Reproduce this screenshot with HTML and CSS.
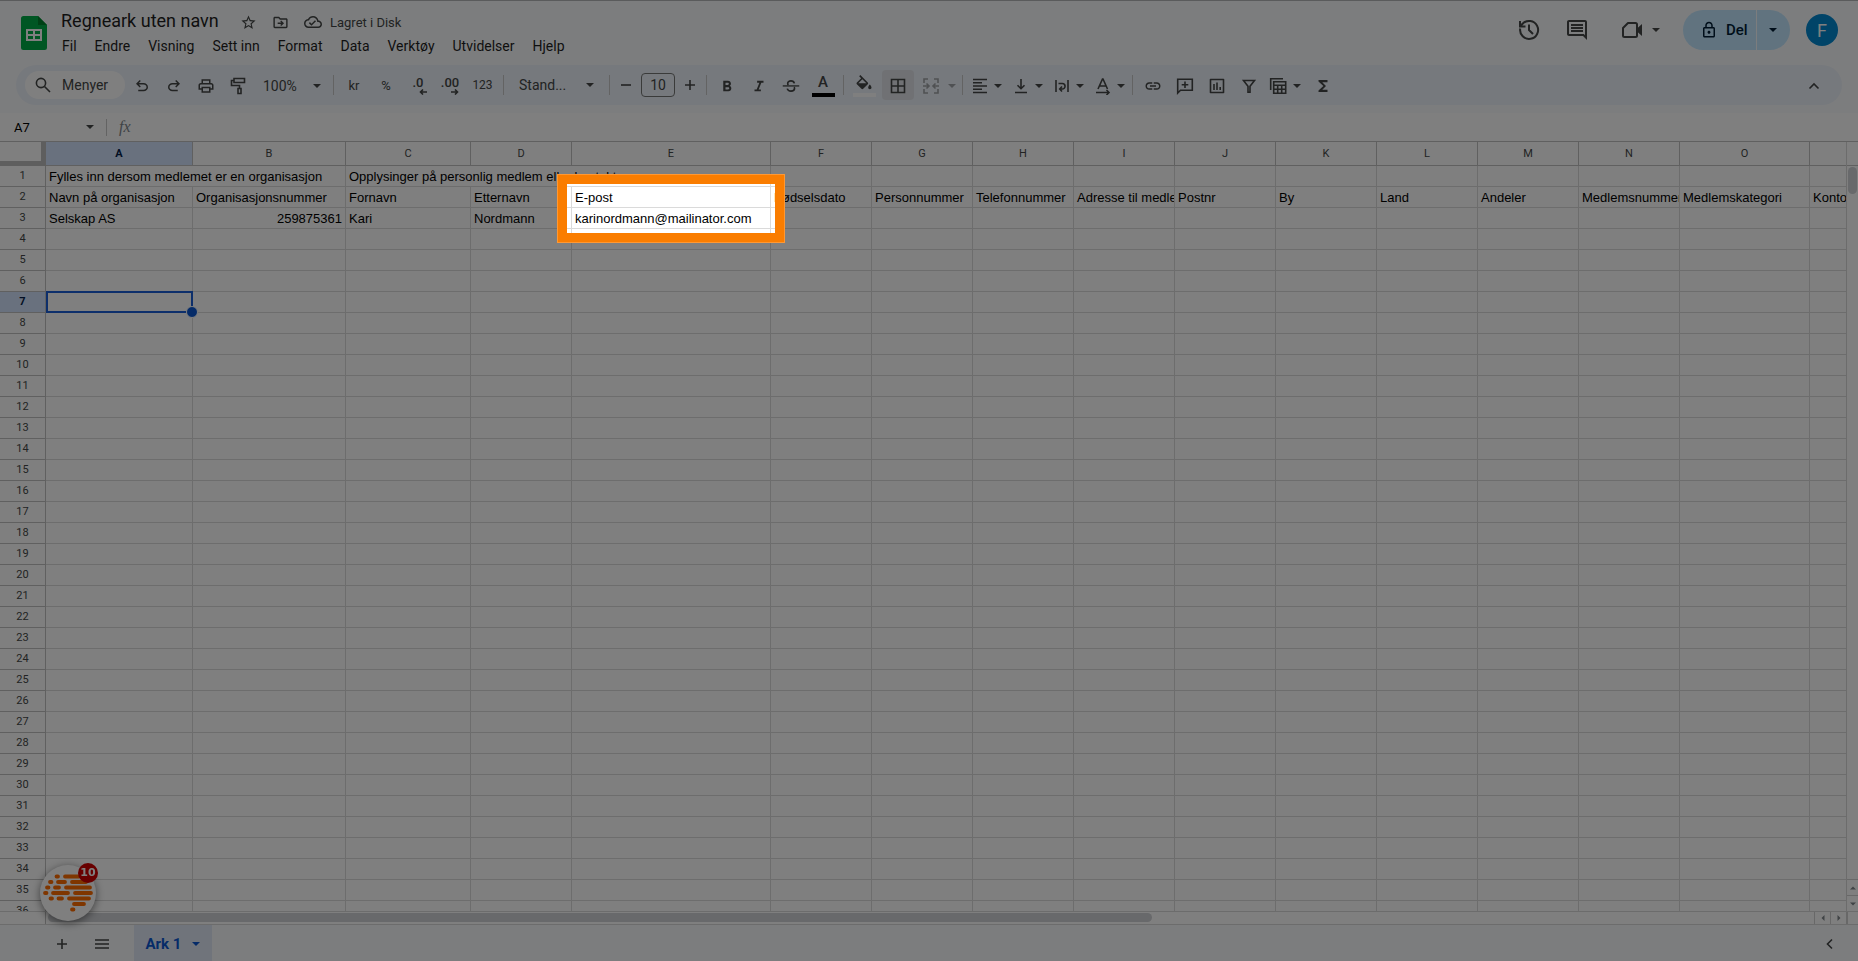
FILE: index.html
```html
<!DOCTYPE html>
<html lang="no">
<head>
<meta charset="utf-8">
<title>Regneark uten navn</title>
<link rel="stylesheet" href="styles.css">
</head>
<body>
<svg class="defs" aria-hidden="true">
  <symbol id="caret" viewBox="0 0 8 4"><path d="M0 0h8L4 4z"/></symbol>
</svg>
<div class="app">
  <header class="top">
    <svg class="logo" viewBox="0 0 26 34"><path fill="#00ac47" d="M2.500 0H17l9 9v22.500a2.500 2.500 0 0 1-2.500 2.500h-21A2.500 2.500 0 0 1 0 31.500v-29A2.500 2.500 0 0 1 2.500 0z"/><path fill="#00832d" d="M17 0l9 9h-9z"/><path fill="#fff" fill-rule="evenodd" d="M5 13h16v12H5zM7 15v3h5v-3zM14 15v3h5v-3zM7 20v3h5v-3zM14 20v3h5v-3z"/></svg>
    <div class="titles">
      <div class="titlerow">
        <input class="doctitle" value="Regneark uten navn" aria-label="Gi nytt navn">
        <button class="ticon" aria-label="Stjerne"><svg viewBox="0 0 24 24"><path d="M22 9.240l-7.190-.62L12 2 9.190 8.630 2 9.240l5.460 4.730L5.820 21 12 17.270 18.180 21l-1.630-7.030L22 9.240zM12 15.400l-3.760 2.270 1-4.280-3.320-2.880 4.380-.38L12 6.100l1.710 4.040 4.380.38-3.320 2.880 1 4.280L12 15.400z"/></svg></button>
        <button class="ticon" aria-label="Flytt"><svg viewBox="0 0 24 24"><path d="M20 6h-8l-2-2H4c-1.100 0-2 .9-2 2v12c0 1.100.9 2 2 2h16c1.100 0 2-.9 2-2V8c0-1.100-.9-2-2-2zm0 12H4V6h5.170l2 2H20v10z"/><path d="M8 12h5.170l-1.590-1.590L13 9l4 4-4 4-1.410-1.410L13.170 14H8z"/></svg></button>
        <button class="ticon saved"><svg viewBox="0 0 24 24"><path d="M19.350 10.040C18.670 6.590 15.640 4 12 4 9.110 4 6.600 5.640 5.350 8.040 2.340 8.360 0 10.910 0 14c0 3.310 2.690 6 6 6h13c2.760 0 5-2.240 5-5 0-2.640-2.050-4.780-4.650-4.960zM19 18H6c-2.210 0-4-1.790-4-4 0-2.050 1.530-3.760 3.560-3.970l1.070-.11.5-.95C8.080 7.140 9.940 6 12 6c2.620 0 4.880 1.860 5.390 4.430l.3 1.500 1.530.11c1.560.1 2.780 1.410 2.780 2.960 0 1.650-1.350 3-3 3zm-9-3.820l-2.090-2.090L6.500 13.500 10 17l6.010-6.010-1.410-1.410z"/></svg><span>Lagret i Disk</span></button>
      </div>
      <nav class="menus">
        <button>Fil</button><button>Endre</button><button>Visning</button><button>Sett inn</button><button>Format</button><button>Data</button><button>Verktøy</button><button>Utvidelser</button><button>Hjelp</button>
      </nav>
    </div>
    <div class="actions">
      <button class="act" aria-label="Versjonslogg"><svg class="line" viewBox="0 0 24 24"><path d="M3.200 10.500A9 9 0 1 0 5.600 5.700L3 8.300M3 3v5.500h5.500M12 6.500V12l4 4"/></svg></button>
      <button class="act" aria-label="Kommentarer"><svg viewBox="0 0 24 24"><path d="M21.990 4c0-1.100-.89-2-1.990-2H4c-1.100 0-2 .9-2 2v12c0 1.100.9 2 2 2h14l4 4-.01-18zM20 4v13.170L18.830 16H4V4h16zM6 12h12v2H6zm0-3h12v2H6zm0-3h12v2H6z"/></svg></button>
      <button class="act meet" aria-label="Møte"><svg viewBox="0 0 24 24"><path fill="none" stroke="currentColor" stroke-width="2" stroke-linejoin="round" d="M8 5h7.500a1.500 1.500 0 0 1 1.500 1.500v11a1.500 1.500 0 0 1-1.500 1.500h-11A1.500 1.500 0 0 1 3 17.500V10z"/><path d="M17 10.500L22 6v12l-5-4.500z"/></svg><svg class="caret"><use href="#caret"/></svg></button>
      <div class="share">
        <button class="del"><svg viewBox="0 0 24 24"><path fill-rule="evenodd" d="M18 8h-1V6c0-2.760-2.240-5-5-5S7 3.240 7 6v2H6c-1.100 0-2 .9-2 2v10c0 1.100.9 2 2 2h12c1.100 0 2-.9 2-2V10c0-1.100-.9-2-2-2zM9 6c0-1.660 1.340-3 3-3s3 1.340 3 3v2H9V6zm9 14H6V10h12v10zm-6-3c1.100 0 2-.9 2-2s-.9-2-2-2-2 .9-2 2 .9 2 2 2z"/></svg>Del</button>
        <button class="delmore" aria-label="Flere delingsvalg"><svg class="caret"><use href="#caret"/></svg></button>
      </div>
      <button class="avatar">F</button>
    </div>
  </header>

  <div class="toolbar">
    <button class="search"><svg class="line" viewBox="0 0 18 18"><circle cx="7" cy="7" r="4.600"/><path d="M10.500 10.500L16 16"/></svg>Menyer</button>
    <button class="tb" aria-label="Angre"><svg viewBox="0 0 24 24"><path d="M7 19v-2h7.100q1.575 0 2.737-1Q18 15 18 13.500T16.837 11Q15.675 10 14.100 10H7.800l2.600 2.600L9 14 4 9l5-5 1.400 1.400L7.800 8h6.300q2.425 0 4.163 1.575Q20 11.150 20 13.500t-1.737 3.925Q16.525 19 14.100 19z"/></svg></button>
    <button class="tb" aria-label="Gjør om"><svg viewBox="0 0 24 24"><path transform="matrix(-1 0 0 1 24 0)" d="M7 19v-2h7.100q1.575 0 2.737-1Q18 15 18 13.500T16.837 11Q15.675 10 14.100 10H7.800l2.600 2.600L9 14 4 9l5-5 1.400 1.400L7.800 8h6.300q2.425 0 4.163 1.575Q20 11.150 20 13.500t-1.737 3.925Q16.525 19 14.100 19z"/></svg></button>
    <button class="tb" aria-label="Skriv ut"><svg viewBox="0 0 24 24"><path d="M19 8h-1V3H6v5H5c-1.660 0-3 1.340-3 3v6h4v4h12v-4h4v-6c0-1.660-1.340-3-3-3zM8 5h8v3H8V5zm8 12v2H8v-4h8v2zm2-2v-2H6v2H4v-4c0-.55.45-1 1-1h14c.55 0 1 .45 1 1v4h-2z"/></svg></button>
    <button class="tb" aria-label="Kopier formatering"><svg class="line" viewBox="0 0 18 18"><path d="M5 1.500h10.500v4H5zM5 3.500H2.500v5H10.500v3M9 11.500h3v5H9z"/></svg></button>
    <button class="zoom">100%<svg class="caret"><use href="#caret"/></svg></button>
    <span class="sep"></span>
    <button class="tb txt">kr</button>
    <button class="tb txt">%</button>
    <button class="tb dec">.0<svg class="line" viewBox="0 0 8 6"><path d="M8 3H1.500M4 .5L1.500 3 4 5.500"/></svg></button>
    <button class="tb dec">.00<svg class="line" viewBox="0 0 8 6"><path d="M0 3h6.500M4 .5L6.500 3 4 5.500"/></svg></button>
    <button class="tb n123">123</button>
    <span class="sep"></span>
    <button class="font">Stand...<svg class="caret"><use href="#caret"/></svg></button>
    <span class="sep"></span>
    <div class="size">
      <button class="step" aria-label="Mindre"><svg class="line" viewBox="0 0 12 12"><path d="M1 6h10"/></svg></button>
      <input value="10" aria-label="Skriftstørrelse">
      <button class="step" aria-label="Større"><svg class="line" viewBox="0 0 12 12"><path d="M1 6h10M6 1v10"/></svg></button>
    </div>
    <span class="sep"></span>
    <button class="tb" aria-label="Fet"><svg viewBox="0 0 24 24"><path d="M15.600 11.790c.97-.67 1.650-1.770 1.650-2.790 0-2.260-1.750-4-4-4H7v14h7.040c2.090 0 3.710-1.700 3.710-3.790 0-1.520-.86-2.820-2.150-3.420zM10 7.500h3c.83 0 1.500.67 1.500 1.500s-.67 1.500-1.500 1.500h-3v-3zm3.500 9H10v-3h3.500c.83 0 1.500.67 1.500 1.500s-.67 1.500-1.500 1.500z"/></svg></button>
    <button class="tb" aria-label="Kursiv"><svg viewBox="0 0 24 24"><path d="M9.500 5v2.500h3l-3.600 9H6V19h8.500v-2.500h-3l3.600-9H18V5z"/></svg></button>
    <button class="tb" aria-label="Gjennomstreking"><svg viewBox="0 0 24 24"><path d="M1 11h22v1.800H1z"/><path fill="none" stroke="currentColor" stroke-width="2.200" d="M16.500 8.500C16 6.400 14.200 5.200 12 5.200c-2.700 0-4.400 1.400-4.400 3.300 0 .9.300 1.600.9 2.200M7 15.500c.6 2.200 2.600 3.300 5 3.300 2.800 0 4.700-1.400 4.700-3.400 0-.8-.2-1.400-.6-1.900"/></svg></button>
    <button class="tb color">A<i class="bar black"></i></button>
    <span class="sep"></span>
    <button class="tb color" aria-label="Fyllfarge"><svg viewBox="0 0 24 18"><path d="M16.560 8.940L7.620 0 6.210 1.410l2.380 2.380-5.150 5.150c-.59.59-.59 1.540 0 2.120l5.500 5.500c.29.29.68.44 1.060.44s.77-.15 1.060-.44l5.500-5.500c.59-.58.59-1.530 0-2.120zM5.210 10L10 5.210 14.790 10H5.210zM19 11.500s-2 2.170-2 3.500c0 1.100.9 2 2 2s2-.9 2-2c0-1.330-2-3.500-2-3.500z"/></svg><i class="bar white"></i></button>
    <button class="tb on" aria-label="Kantlinjer"><svg class="line" viewBox="0 0 18 18"><path d="M2.500 2.500h13v13h-13zM9 2.500v13M2.500 9h13"/></svg></button>
    <button class="combo off" aria-label="Slå sammen"><svg class="line" viewBox="0 0 18 18"><path d="M6 2H2v4M12 2h4v4M6 16H2v-4M12 16h4v-4M1 9h5.500M4.500 6.500L7 9l-2.500 2.500M17 9h-5.500M13.500 6.500L11 9l2.500 2.500"/></svg><svg class="caret"><use href="#caret"/></svg></button>
    <span class="sep"></span>
    <div class="combos">
      <button class="combo" aria-label="Vannrett justering"><svg class="line" viewBox="0 0 18 18"><path d="M2 2.500h14M2 5.700h9M2 9h14M2 12.300h9M2 15.500h14"/></svg><svg class="caret"><use href="#caret"/></svg></button>
      <button class="combo" aria-label="Loddrett justering"><svg class="line" viewBox="0 0 18 18"><path d="M3 15.500h12M9 2v9.500M5.500 8.200L9 11.700l3.500-3.500"/></svg><svg class="caret"><use href="#caret"/></svg></button>
      <button class="combo" aria-label="Tekstbryting"><svg class="line" viewBox="0 0 18 18"><path d="M3 3v12M15 3v12M5.500 6.500h3.800a2.700 2.700 0 0 1 0 5.500H7M9 9.500L6.700 12 9 14.500"/></svg><svg class="caret"><use href="#caret"/></svg></button>
      <button class="combo" aria-label="Tekstrotasjon"><svg class="line" viewBox="0 0 18 18"><path d="M4 12L8.500 2h.5L13.500 12M5.500 9h6.500M2 15.500h12.500M12.500 13l2.500 2.500-2.500 2.500"/></svg><svg class="caret"><use href="#caret"/></svg></button>
    </div>
    <span class="sep"></span>
    <button class="tb" aria-label="Link"><svg viewBox="0 0 24 24"><path d="M3.900 12c0-1.710 1.390-3.100 3.100-3.100h4V7H7c-2.760 0-5 2.240-5 5s2.240 5 5 5h4v-1.900H7c-1.710 0-3.100-1.390-3.100-3.100zM8 13h8v-2H8v2zm9-6h-4v1.900h4c1.710 0 3.100 1.390 3.100 3.100s-1.390 3.100-3.100 3.100h-4V17h4c2.760 0 5-2.240 5-5s-2.240-5-5-5z"/></svg></button>
    <button class="tb" aria-label="Kommentar"><svg class="line" viewBox="0 0 18 18"><path d="M1.700 16V2.200h14.600v11H4.500zM9 4.500v6.500M5.700 7.700h6.600"/></svg></button>
    <button class="tb" aria-label="Diagram"><svg class="line" viewBox="0 0 18 18"><path stroke-linejoin="round" d="M2.500 2.500h13v13h-13zM6 7v6M9 5.500V13M12.200 10v3"/></svg></button>
    <button class="tb" aria-label="Filter"><svg class="line" viewBox="0 0 18 18"><path d="M3.500 3.500h11L10 9.300v5.900H8V9.300z"/></svg></button>
    <button class="combo wide" aria-label="Tabellvisninger"><svg class="line" viewBox="0 0 18 18"><path d="M1.700 13V1.700H14M4.700 4.700h12v11.600h-12zM4.700 8.300h12M4.700 12.300h12M8.700 8.300v8M12.700 8.300v8"/></svg><svg class="caret"><use href="#caret"/></svg></button>
    <button class="tb" aria-label="Funksjoner"><svg viewBox="0 0 24 24"><path d="M18 4H6v2l6.500 6L6 18v2h12v-3h-7l5-5-5-5h7z"/></svg></button>
    <button class="tb last" aria-label="Skjul menyene"><svg class="line" viewBox="0 0 18 18"><path d="M4.500 11.500L9 7l4.500 4.500"/></svg></button>
  </div>

  <div class="formula">
    <input class="name" value="A7" aria-label="Navneboks"><svg class="caret"><use href="#caret"/></svg>
    <span class="fsep"></span>
    <label class="fx" for="fx">fx</label><input id="fx" class="fxin">
  </div>

  <main class="sheet">
    <div class="viewport">
      <table>
        <colgroup><col class="w46"><col class="w147"><col class="w153"><col class="w125"><col class="w101"><col class="w199"><col class="w101" span="9"><col class="w130"><col class="w101"></colgroup>
        <thead><tr><th class="corner"></th><th class="sel">A</th><th>B</th><th>C</th><th>D</th><th>E</th><th>F</th><th>G</th><th>H</th><th>I</th><th>J</th><th>K</th><th>L</th><th>M</th><th>N</th><th>O</th><th></th></tr></thead>
        <tbody id="rows">
          <tr><th>1</th><td colspan="2">Fylles inn dersom medlemet er en organisasjon</td><td colspan="3">Opplysinger på personlig medlem eller kontaktperson</td><td></td><td></td><td></td><td></td><td></td><td></td><td></td><td></td><td></td><td></td><td></td></tr>
          <tr><th>2</th><td>Navn på organisasjon</td><td>Organisasjonsnummer</td><td>Fornavn</td><td>Etternavn</td><td>E-post</td><td>Fødselsdato</td><td>Personnummer</td><td>Telefonnummer</td><td>Adresse til medlem</td><td>Postnr</td><td>By</td><td>Land</td><td>Andeler</td><td>Medlemsnummer</td><td>Medlemskategori</td><td>Kontonummer</td></tr>
          <tr><th>3</th><td>Selskap AS</td><td class="num">259875361</td><td>Kari</td><td>Nordmann</td><td>karinordmann@mailinator.com</td><td></td><td></td><td></td><td></td><td></td><td></td><td></td><td></td><td></td><td></td><td></td></tr>
        </tbody>
      </table>
    </div>
    <div class="vscroll">
      <div class="vhead"></div>
      <div class="vtrack"><div class="vthumb"></div></div>
      <button class="up" aria-label="Opp"><svg viewBox="0 0 6 4"><path d="M0 3.500h6L3 .5z"/></svg></button>
      <button class="down" aria-label="Ned"><svg viewBox="0 0 6 4"><path d="M0 .5h6L3 3.500z"/></svg></button>
    </div>
  </main>
  <div class="hscroll">
    <div class="hstub"></div>
    <div class="htrack"><div class="hthumb"></div></div>
    <button aria-label="Venstre"><svg viewBox="0 0 4 6"><path d="M3.500 0v6L.5 3z"/></svg></button>
    <button aria-label="Høyre"><svg viewBox="0 0 4 6"><path d="M.5 0v6l3-3z"/></svg></button>
    <div class="hend"></div>
  </div>
  <footer class="tabs">
    <button class="ft" aria-label="Legg til ark"><svg class="line" viewBox="0 0 18 18"><path d="M4 9h10M9 4v10"/></svg></button>
    <button class="ft" aria-label="Alle ark"><svg class="line" viewBox="0 0 18 18"><path d="M2 5h14M2 9h14M2 13h14"/></svg></button>
    <button class="tab">Ark 1<svg class="caret"><use href="#caret"/></svg></button>
    <button class="ft side" aria-label="Vis sidefelt"><svg class="line" viewBox="0 0 18 18"><path d="M11 4.500L6.500 9l4.500 4.500"/></svg></button>
  </footer>
</div>

<button class="fab" aria-label="Hjelpesenter">
  <svg viewBox="0 0 56 56"><path fill="none" stroke="#ff6d00" stroke-width="3.800" stroke-linecap="round" d="M16.500 11.500h1.500M25 11.500h14M10 17h1.500M18 17h7M32 17h14M7 22.500h1.500M15 22.500h4M26 22.500h24M5 28h1.500M13 28h15M35 28h16M10.500 33.500h1.500M18.500 33.500h3.500M29 33.500h20M34 39h10M32 44.500h1.500"/></svg>
  <span class="badge">10</span>
</button>
<div class="spotlight"></div>
<script src="script.js"></script>
</body>
</html>
```

FILE: styles.css
```css
* { box-sizing: border-box; }
html, body { height: 100%; }
body { margin: 0; overflow: hidden; font-family: Roboto, "Liberation Sans", sans-serif; color: #1f1f1f; background: #fff; }
button, input { margin: 0; padding: 0; border: 0; background: none; font: inherit; color: inherit; }
svg { fill: currentColor; flex: none; }
.line { fill: none; stroke: currentColor; stroke-width: 1.6; }
.caret { width: 8px; height: 4px; }
.defs { position: absolute; width: 0; height: 0; }

.app { height: 100%; display: flex; flex-direction: column; background: #f9fbfd; border-top: 1px solid #b4b6b8; }

.top { display: flex; height: 64px; padding-left: 21px; flex: none; }
.logo { width: 26px; height: 34px; margin-top: 15px; }
.titles { padding: 7px 0 0 7px; }
.titlerow { display: flex; align-items: center; height: 26px; color: #444746; }
.doctitle { width: 174px; height: 26px; padding: 0 7px 2px; font-size: 18px; color: #1f1f1f; }
.ticon { width: 32px; height: 24px; margin-top: 2px; display: flex; align-items: center; justify-content: center; }
.ticon svg { width: 17px; height: 17px; }
.titlerow .ticon:nth-child(2) { margin-left: 4px; }
.saved { width: auto; gap: 8px; padding: 0 8px; font-size: 13px; }
.saved svg { width: 18px; height: 18px; }
.menus { display: flex; gap: 2px; height: 24px; }
.menus button { padding: 0 8px; font-size: 14px; line-height: 24px; }
.actions { margin-left: auto; display: flex; align-items: center; height: 58px; padding-right: 20px; color: #444746; }
.act { width: 48px; height: 40px; display: flex; align-items: center; justify-content: center; }
.act svg { width: 24px; height: 24px; }
.act .caret { width: 8px; height: 4px; }
.act .line { stroke-width: 2; }
.meet { width: 70px; gap: 8px; margin: 0 8px 0 4px; }
.share { display: flex; gap: 1px; height: 40px; color: #001d35; }
.del { width: 73px; border-radius: 20px 0 0 20px; background: #c2e7ff; display: flex; align-items: center; gap: 8px; padding-left: 17px; font-size: 15px; font-weight: 500; }
.del svg { width: 18px; height: 18px; }
.delmore { width: 33px; padding-right: 2px; border-radius: 0 20px 20px 0; background: #c2e7ff; display: flex; align-items: center; justify-content: center; }
.avatar { width: 32px; height: 32px; margin-left: 16px; border-radius: 50%; background: #0288d1; color: #fff; font-size: 18px; }

.toolbar { display: flex; align-items: center; flex: none; height: 40px; margin: 0 16px 8px; padding: 0 12px 0 9px; border-radius: 20px; background: #edf2fa; color: #444746; }
.search { display: flex; align-items: center; gap: 10px; width: 100px; height: 28px; margin-right: 1px; padding-left: 9px; border-radius: 14px; background: #fff; font-size: 14px; }
.search svg { width: 18px; height: 18px; }
.tb { width: 32px; height: 30px; padding-top: 2px; display: flex; align-items: center; justify-content: center; flex: none; }
.tb svg, .combo svg { width: 18px; height: 18px; }
.combo .caret { width: 8px; height: 4px; }
.sep { width: 1px; height: 20px; margin: 0 4px; background: #c7c7c7; flex: none; }
.zoom { width: 75px; padding: 2px 8px 0 9px; display: flex; align-items: center; justify-content: space-between; font-size: 14px; }
.txt { padding: 0; font-size: 13px; }
.n123 { width: 33px; padding: 0; font-size: 12px; }
.dec { flex-direction: column; font-size: 13px; font-weight: 500; line-height: 12px; padding-top: 1px; }
.tb.dec svg { width: 8px; height: 6px; margin-left: 9px; }
.font { width: 97px; padding: 0 11px; display: flex; align-items: center; justify-content: space-between; font-size: 14px; }
.size { display: flex; align-items: center; gap: 3px; }
.size input { width: 34px; height: 24px; border: 1px solid #747775; border-radius: 4px; text-align: center; font-size: 14px; }
.step { width: 24px; height: 24px; display: flex; align-items: center; justify-content: center; }
.step svg { width: 12px; height: 12px; }
.color { flex-direction: column; font-size: 15px; font-weight: 500; line-height: 17px; gap: 2px; padding: 0; }
.tb.color svg { width: 20px; height: 17px; }
.bar { width: 23px; height: 4px; }
.black { background: #000; }
.white { background: #fff; }
.on { margin: 0 1px 0 2px; border-radius: 4px; background: #e1e3e8; }
.combo { width: 38px; height: 30px; padding: 2px 0 0 4px; display: flex; align-items: center; gap: 5px; }
.off { width: 43px; padding-left: 7px; gap: 8px; color: #9fa2a6; }
.wide { width: 42px; gap: 6px; }
.combos { display: flex; gap: 3px; }
.last { margin-left: auto; }

.formula { display: flex; align-items: center; flex: none; height: 28px; padding-left: 14px; background: #fff; color: #444746; }
.name { width: 72px; font-size: 13px; color: #000; }
.fsep { width: 1px; height: 17px; margin: 0 12px; background: #c7c7c7; }
.fx { font: italic 16px "Liberation Serif", serif; color: #80868b; }
.fxin { flex: 1; margin-left: 8px; }

.sheet { flex: 1; min-height: 0; display: flex; background: #fff; border-top: 1px solid #c0c0c0; }
.viewport { flex: 1; min-width: 0; overflow: hidden; }
table { table-layout: fixed; width: 1911px; border-collapse: separate; border-spacing: 0; }
.w46 { width: 46px; } .w101 { width: 101px; } .w125 { width: 125px; } .w130 { width: 130px; } .w147 { width: 147px; } .w153 { width: 153px; } .w199 { width: 199px; }
th { padding: 0 0 1px; font-size: 11px; line-height: 18px; font-weight: 400; color: #444746; border: solid #c0c0c0; border-width: 0 1px 1px 0; }
thead th { height: 24px; padding: 0; }
.corner { border: solid #bdbdbd; border-width: 0 5px 5px 0; }
th.sel { background: #d3e3fd; color: #041e49; font-weight: 700; }
td { position: relative; height: 21px; padding: 1px 3px 0; border: solid #dadada; border-width: 0 1px 1px 0; font: 13px/19px "Liberation Sans", Arial, sans-serif; color: #000; white-space: nowrap; overflow: hidden; }
.num { text-align: right; }
td.active { overflow: visible; z-index: 1; }
.cursor { position: absolute; inset: -1px -1px -1px 0; border: 2px solid #1a5fd6; }
.cursor::after { content: ""; position: absolute; right: -7px; bottom: -7px; width: 10px; height: 10px; border: 1px solid #fff; border-radius: 50%; background: #0b57d0; }

.vscroll { width: 12px; display: flex; flex-direction: column; border-left: 1px solid #d9d9d9; }
.vhead { height: 24px; border-bottom: 1px solid #c0c0c0; }
.vtrack { flex: 1; padding: 1px; }
.vthumb { height: 27px; border-radius: 5px; background: #d0d2d6; }
.vscroll button { height: 16px; border-top: 1px solid #d0d0d0; display: flex; align-items: center; justify-content: center; color: #80868b; }
.vscroll svg { width: 6px; height: 4px; }
.hscroll { display: flex; flex: none; height: 13px; background: #fff; border-top: 1px solid #d9d9d9; }
.hstub { width: 46px; border-right: 1px solid #c0c0c0; }
.htrack { flex: 1; padding: 1px 0 1px 2px; }
.hthumb { width: 62.5%; height: 9px; border-radius: 5px; background: #d0d2d6; }
.hscroll button { width: 16px; border-left: 1px solid #d0d0d0; display: flex; align-items: center; justify-content: center; color: #80868b; }
.hscroll svg { width: 4px; height: 6px; }
.hend { width: 12px; border-left: 2px solid #d0d0d0; }

.tabs { display: flex; align-items: stretch; flex: none; height: 37px; padding: 0 8px 0 42px; border-top: 1px solid #d9d9d9; color: #444746; }
.ft { width: 40px; padding-top: 2px; display: flex; align-items: center; justify-content: center; }
.ft svg { width: 18px; height: 18px; }
.tab { width: 78px; margin-left: 12px; padding-top: 2px; display: flex; align-items: center; justify-content: center; gap: 11px; background: #e1e9f7; color: #0b57d0; font-size: 15px; font-weight: 700; }
.side { margin-left: auto; }

.fab { position: fixed; left: 40px; bottom: 40px; z-index: 2; width: 56px; height: 56px; border-radius: 50%; background: #fff; box-shadow: 0 2px 8px rgba(0, 0, 0, .5); }
.fab svg { display: block; width: 56px; height: 56px; }
.badge { position: absolute; top: -2px; right: -2px; width: 20px; height: 20px; border-radius: 50%; background: #d00000; color: #fff; font: 700 11px/20px "DejaVu Sans", sans-serif; }

.spotlight { position: absolute; z-index: 10; left: 557px; top: 174px; width: 228px; height: 69px; border: 1px solid #ff9833; box-shadow: inset 0 0 0 9px #fa7d00, 0 0 0 4000px rgba(0, 0, 0, .5); pointer-events: none; }
```

FILE: script.js
```js
const body = document.getElementById("rows");
for (let n = 4; n <= 36; n++) {
  const row = body.insertRow();
  const head = document.createElement("th");
  head.textContent = n;
  row.append(head);
  for (let c = 0; c < 16; c++) row.insertCell();
  if (n === 7) {
    head.className = "sel";
    row.cells[1].className = "active";
    row.cells[1].innerHTML = '<div class="cursor"></div>';
  }
}
```
